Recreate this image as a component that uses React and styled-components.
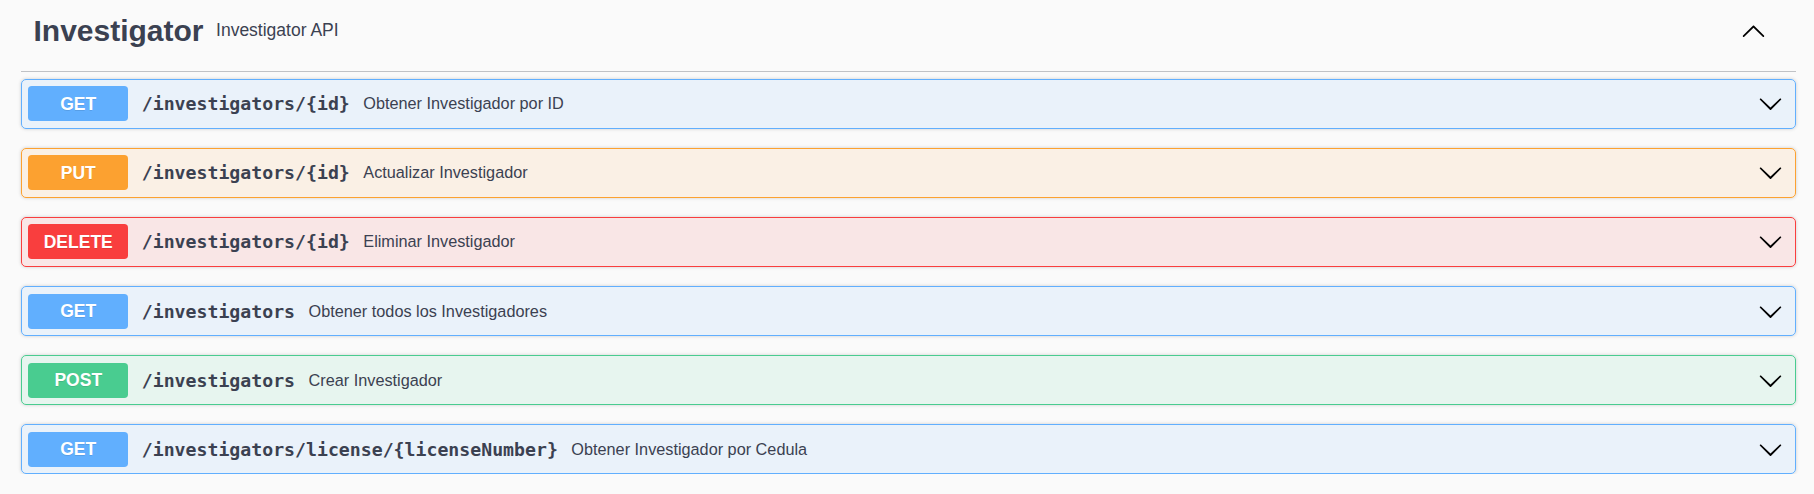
import React from 'react';
import styled, { createGlobalStyle } from 'styled-components';

const GlobalStyle = createGlobalStyle`
  html, body {
    margin: 0;
    padding: 0;
    background: #fafafa;
  }
  body {
    font-family: "Liberation Sans", Arial, sans-serif;
    color: #3b4151;
  }
`;

const METHOD_COLORS = {
  GET: '#61affe',
  PUT: '#fca130',
  DELETE: '#f93e3e',
  POST: '#49cc90',
};

const operations = [
  { method: 'GET', path: '/investigators/{id}', summary: 'Obtener Investigador por ID' },
  { method: 'PUT', path: '/investigators/{id}', summary: 'Actualizar Investigador' },
  { method: 'DELETE', path: '/investigators/{id}', summary: 'Eliminar Investigador' },
  { method: 'GET', path: '/investigators', summary: 'Obtener todos los Investigadores' },
  { method: 'POST', path: '/investigators', summary: 'Crear Investigador' },
  { method: 'GET', path: '/investigators/license/{licenseNumber}', summary: 'Obtener Investigador por Cedula' },
];

const Wrapper = styled.div`
  padding: 0 18px 0 21px;
`;

const TagHeader = styled.div`
  display: flex;
  align-items: center;
  padding: 13px 30px 23px 12.5px;
  border-bottom: 1.25px solid rgba(59, 65, 81, 0.3);
  margin-bottom: 6.5px;
`;

const TagTitle = styled.h3`
  margin: 0;
  font-size: 30px;
  font-weight: 700;
  line-height: 35px;
  color: #3b4151;
`;

const TagSub = styled.small`
  flex: 1;
  padding: 0 12.5px;
  font-size: 17.5px;
  color: #3b4151;
`;

const ArrowButton = styled.span`
  display: flex;
  align-items: center;
  margin-left: auto;
  margin-right: ${(p) => p.$right || 0}px;
`;

const OpList = styled.div`
  display: flex;
  flex-direction: column;
  gap: 19.2px;
`;

const OpBlock = styled.div`
  display: flex;
  align-items: center;
  box-sizing: border-box;
  height: 50px;
  padding: 0 6.25px;
  border: 1.25px solid ${(p) => p.$color};
  background: ${(p) => p.$color}1a;
  border-radius: 5px;
  box-shadow: 0 0 3.75px rgba(0, 0, 0, 0.19);
`;

const MethodBadge = styled.span`
  flex: 0 0 auto;
  width: 100px;
  padding: 7.5px 0;
  line-height: 20px;
  text-align: center;
  border-radius: 3.75px;
  background: ${(p) => p.$color};
  color: #fff;
  font-size: 17.5px;
  font-weight: 700;
  text-shadow: 0 1.25px 0 rgba(0, 0, 0, 0.1);
`;

const OpPath = styled.span`
  padding: 0 13.5px;
  font-family: "DejaVu Sans Mono", "Liberation Mono", monospace;
  font-size: 18.2px;
  font-weight: 700;
  color: #3b4151;
`;

const OpDesc = styled.span`
  font-size: 16.25px;
  color: #3b4151;
`;

const ChevronDown = () => (
  <svg width="25" height="25" viewBox="0 0 20 20" aria-hidden="true">
    <path
      fill="#000"
      d="M17.418 6.109c.272-.268.709-.268.979 0s.271.701 0 .969l-7.908 7.83c-.27.268-.707.268-.979 0l-7.908-7.83c-.27-.268-.27-.701 0-.969.271-.268.709-.268.979 0L10 13.25l7.418-7.141z"
    />
  </svg>
);

const ChevronUp = () => (
  <svg width="25" height="25" viewBox="0 0 20 20" aria-hidden="true">
    <path
      fill="#000"
      d="M17.418 14.908c.272.268.709.268.979 0s.271-.701 0-.969l-7.908-7.83c-.27-.268-.707-.268-.979 0l-7.908 7.83c-.27.268-.27.701 0 .969.271.268.709.268.979 0L10 7.767l7.418 7.141z"
    />
  </svg>
);

export default function App() {
  return (
    <>
      <GlobalStyle />
      <Wrapper>
        <TagHeader>
          <TagTitle>Investigator</TagTitle>
          <TagSub>Investigator API</TagSub>
          <ArrowButton $right={0}>
            <ChevronUp />
          </ArrowButton>
        </TagHeader>
        <OpList>
          {operations.map((op, i) => {
            const color = METHOD_COLORS[op.method];
            return (
              <OpBlock key={i} $color={color}>
                <MethodBadge $color={color}>{op.method}</MethodBadge>
                <OpPath>{op.path}</OpPath>
                <OpDesc>{op.summary}</OpDesc>
                <ArrowButton $right={6}>
                  <ChevronDown />
                </ArrowButton>
              </OpBlock>
            );
          })}
        </OpList>
      </Wrapper>
    </>
  );
}
